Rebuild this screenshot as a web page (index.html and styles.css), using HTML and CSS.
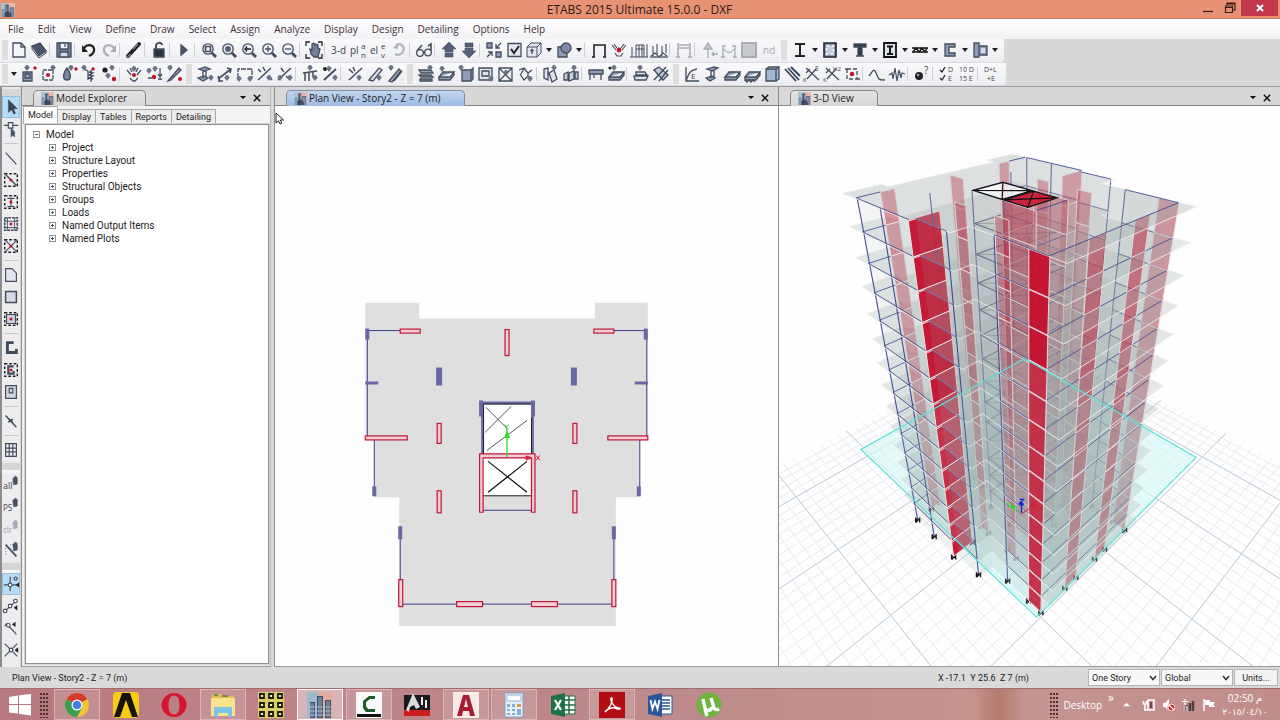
FILE: index.html
```html
<!DOCTYPE html>
<html lang="en">
<head>
<meta charset="utf-8">
<title>ETABS 2015 Ultimate 15.0.0 - DXF</title>
<link rel="stylesheet" href="styles.css">
</head>
<body>
<svg class="defs" aria-hidden="true">
  <symbol id="app" viewBox="0 0 16 16">
    <rect width="16" height="16" fill="#e8b9ae"/><rect width="7" height="16" fill="#a9c3cf"/>
    <rect x="1" y="7" width="3" height="9" fill="#5b83a0"/><rect x="5" y="2" width="4" height="14" fill="#2d3c5c"/>
    <rect x="10" y="5" width="5" height="11" fill="#56637f"/>
    <path d="M6 3v13M8 3v13M11.500 6v10M13.500 6v10M2.500 8v8" stroke="#cdd6e4" stroke-width=".7"/>
    <path d="M4 11l4-2 4 3v4H4z" fill="#26314c" opacity=".7"/>
  </symbol>
  <symbol id="x" viewBox="0 0 10 10"><path d="M1 1l8 8M9 1l-8 8" stroke="currentColor" stroke-width="1.8"/></symbol>
  <symbol id="down" viewBox="0 0 10 6"><path d="M1 1h8L5 5z" fill="currentColor"/></symbol>
  <symbol id="chev" viewBox="0 0 8 6"><path d="M1 1l3 3.500L7 1" fill="none" stroke="#333" stroke-width="1.500"/></symbol>
</svg>
<div class="window">
  <header class="titlebar">
    <svg class="title-icon"><use href="#app"/></svg>
    <h1>ETABS 2015 Ultimate 15.0.0 - DXF</h1>
    <div class="win-buttons">
      <button aria-label="Minimize"><svg viewBox="0 0 12 12"><path d="M1 9.500h10" stroke="#3a1d16" stroke-width="1.300"/></svg></button>
      <button aria-label="Restore"><svg viewBox="0 0 12 12"><path d="M3 3V1h8v7H9M1.500 4h7v6.500h-7zM1.500 5.500h7M3 2h8" fill="none" stroke="#3a1d16" stroke-width="1.200"/></svg></button>
      <button class="win-close" aria-label="Close"><svg viewBox="0 0 12 12"><path d="M3 3l6 6M9 3l-6 6" stroke="#fff" stroke-width="2"/></svg></button>
    </div>
  </header>
  <nav class="menubar">
    <button>File</button><button>Edit</button><button>View</button><button>Define</button><button>Draw</button><button>Select</button><button>Assign</button><button>Analyze</button><button>Display</button><button>Design</button><button>Detailing</button><button>Options</button><button>Help</button>
  </nav>
  <div class="toolbars">
    <div class="toolbar" id="bar-main" role="toolbar" aria-label="Main"></div>
    <div class="toolbar" id="bar-assign" role="toolbar" aria-label="Assign"></div>
  </div>
  <main class="workspace">
    <div class="side-tools" id="bar-side" role="toolbar" aria-label="Draw"></div>
    <section class="panel explorer">
      <div class="panel-head">
        <h2 class="panel-tab"><svg><use href="#app"/></svg>Model Explorer</h2>
        <button aria-label="Panel menu"><svg class="i-down"><use href="#down"/></svg></button>
        <button aria-label="Close panel"><svg class="i-x"><use href="#x"/></svg></button>
      </div>
      <div class="tabs" role="tablist">
        <button role="tab" class="tab active" aria-selected="true">Model</button><button role="tab" class="tab">Display</button><button role="tab" class="tab">Tables</button><button role="tab" class="tab">Reports</button><button role="tab" class="tab">Detailing</button>
      </div>
      <div class="tree-box">
        <ul class="tree">
          <li><button class="twist minus" aria-label="Collapse"></button><span>Model</span>
            <ul>
              <li><button class="twist" aria-label="Expand"></button><span>Project</span></li>
              <li><button class="twist" aria-label="Expand"></button><span>Structure Layout</span></li>
              <li><button class="twist" aria-label="Expand"></button><span>Properties</span></li>
              <li><button class="twist" aria-label="Expand"></button><span>Structural Objects</span></li>
              <li><button class="twist" aria-label="Expand"></button><span>Groups</span></li>
              <li><button class="twist" aria-label="Expand"></button><span>Loads</span></li>
              <li><button class="twist" aria-label="Expand"></button><span>Named Output Items</span></li>
              <li><button class="twist" aria-label="Expand"></button><span>Named Plots</span></li>
            </ul>
          </li>
        </ul>
      </div>
    </section>
    <section class="panel plan">
      <div class="panel-head">
        <h2 class="panel-tab current"><svg><use href="#app"/></svg>Plan View - Story2 - Z = 7 (m)</h2>
        <button aria-label="Panel menu"><svg class="i-down"><use href="#down"/></svg></button>
        <button aria-label="Close panel"><svg class="i-x"><use href="#x"/></svg></button>
      </div>
      <div class="canvas">
        <svg class="drawing" id="plan" viewBox="275 106 503 561"></svg>
        <svg class="cursor" viewBox="0 0 10 14"><path d="M1 1v10l2.500-2.300L5 12l1.800-.8L5.300 8H8.500z" fill="#fff" stroke="#222"/></svg>
      </div>
    </section>
    <section class="panel view3d">
      <div class="panel-head">
        <h2 class="panel-tab"><svg><use href="#app"/></svg>3-D View</h2>
        <button aria-label="Panel menu"><svg class="i-down"><use href="#down"/></svg></button>
        <button aria-label="Close panel"><svg class="i-x"><use href="#x"/></svg></button>
      </div>
      <div class="canvas"><svg class="drawing" id="tower" viewBox="779 106 500 561"></svg></div>
    </section>
  </main>
  <footer class="statusbar">
    <span class="status-text">Plan View - Story2 - Z = 7 (m)</span>
    <span class="coords">X -17.1&nbsp; Y 25.6&nbsp; Z 7 (m)</span>
    <label class="pick"><select aria-label="Story mode"><option>One Story</option></select><svg><use href="#chev"/></svg></label>
    <label class="pick"><select aria-label="Coordinate system"><option>Global</option></select><svg><use href="#chev"/></svg></label>
    <button class="units">Units...</button>
  </footer>
  <div class="taskbar">
    <button class="start" aria-label="Start"><svg viewBox="0 0 24 24"><path d="M1 4l9-1.500V11H1zM11 2.300L23 1v10H11zM1 12h9v8.500L1 19.500zM11 12h12v10.500L11 20.700z" fill="#fff"/></svg></button>
    <span class="dots"></span>
    <div class="apps" id="apps"></div>
    <div class="tray">
      <span class="dots"></span>
      <span class="desktop">Desktop</span><span class="more">»</span>
      <svg class="tri" viewBox="0 0 8 5"><path d="M0 4.500h8L4 .5z" fill="#fff"/></svg>
      <svg class="tray-i" viewBox="0 0 14 14"><path d="M6 2h6v10H6zM1.500 3v3h3V3M3 6v6M2 12h4" fill="none" stroke="#fff" stroke-width="1.500"/><path d="M8 4h2v6H8z" fill="#6b4545"/></svg>
      <svg class="tray-i" viewBox="0 0 14 14"><path d="M1 5h2l4-4v12L3 9H1z" fill="#fff"/><circle cx="9.500" cy="9.500" r="4" fill="#c22" /><path d="M7 7l5 5" stroke="#fff" stroke-width="1.300"/><circle cx="9.500" cy="9.500" r="3.500" fill="none" stroke="#fff"/></svg>
      <svg class="tray-i" viewBox="0 0 14 14"><path d="M2 9v4M5 7v6M8 5v8M11 3v10" stroke="#54403f" stroke-width="2.400"/><path d="M3 1v6M0 3.500h6M2 9v4M5 8v5" stroke="#fff" stroke-width="1.200"/></svg>
      <svg class="tray-i" viewBox="0 0 14 14"><path d="M2 1v12" stroke="#fff" stroke-width="1.500"/><path d="M3 2h5v2h5l-1.500 2.500L13 9H7V7H3z" fill="#fff"/></svg>
      <div class="clock"><span>02:50 م</span><bdo dir="ltr">٢٠١٥/٠٤/١٠</bdo></div>
    </div>
  </div>
</div>
<script src="app.js"></script>
</body>
</html>
```
FILE: styles.css
```css
* { box-sizing: border-box; }
body { margin: 0; font-family: Roboto, "Liberation Sans", Arial, sans-serif; font-size: 10px; color: #1c1c1c; }
button { font: inherit; color: inherit; background: none; border: 0; padding: 0; margin: 0; }
h1, h2, ul { margin: 0; padding: 0; font-weight: normal; list-style: none; }
.defs { position: absolute; width: 0; height: 0; }
.window { display: flex; flex-direction: column; height: 100vh; overflow: hidden; background: #d8d8d7; }

.titlebar { flex: none; display: flex; align-items: flex-start; height: 19px; background: #e89273; border-bottom: 1px solid #c07a5e; }
.title-icon { width: 14px; height: 14px; margin: 3px 0 0 1px; flex: none; }
.titlebar h1 { flex: 1; padding-left: 67px; text-align: center; font: 12px/20px "Open Sans", "Noto Sans", sans-serif; color: #2c1a14; }
.win-buttons { display: flex; width: 83px; justify-content: flex-end; padding-right: 2px; }
.win-buttons button { width: 22px; height: 16px; display: grid; place-items: center; }
.win-buttons svg { width: 12px; height: 12px; }
.win-buttons .win-close { width: 37px; background: #c2394e; }

.menubar { flex: none; display: flex; gap: 14px; height: 20px; padding-left: 8px; background: linear-gradient(#fdfdfe, #f3f2f5); font: 10px/20px "Open Sans", "Noto Sans", sans-serif; color: #3f3038; }

.toolbars { flex: none; height: 48px; display: flex; flex-direction: column; align-items: flex-start; border-bottom: 1px solid #9b9b9b; }
.toolbar { display: flex; align-items: center; height: 24px; padding-right: 4px; background: linear-gradient(#fafafc, #ecedf1); border-bottom: 1px solid #dcdcdf; border-radius: 0 0 4px 0; }
.tool { width: 20px; height: 22px; display: grid; place-items: center; }
.tool svg, .drop svg { width: 20px; height: 20px; display: block; fill: none; stroke: #444d5e; stroke-width: 1.3; }
.tool text { fill: #3f434b; stroke: none; font-family: "Open Sans", sans-serif; }
.drop { width: 10px; height: 22px; display: grid; place-items: center; }
.drop svg { width: 6px; height: 4px; fill: #222; stroke: none; }
.sep { width: 5px; height: 14px; border-left: 1px solid #cfd0d6; }
.grip { width: 11px; height: 20px; background: linear-gradient(90deg, #f5f5f6 2px, #dededf 2px 8px, #f5f5f6 8px); }
.grip:first-child { width: 9px; }
.off { opacity: .42; }

.workspace { flex: 1; min-height: 0; display: grid; grid-template-columns: 21px 250px minmax(0, 507fr) minmax(0, 502fr); }
.side-tools { display: flex; flex-direction: column; background: #ededf0; border-left: 2px solid #8c8c8c; border-right: 1px solid #d5d5d8; }
.side-tools .tool { width: 18px; height: 22px; flex: none; }
.side-tools .tool svg { width: 18px; height: 18px; }
.side-tools .tool.on { background: #b9dcf5; border: 1px solid #8fc0e6; }
.side-tools .sep { width: 14px; height: 7px; border: 0; margin-left: 2px; background: linear-gradient(transparent 3px, #c6c7cc 3px 4px, transparent 4px); flex: none; }
.side-tools .grip { width: 18px; height: 12px; background: linear-gradient(#e9e9ea 2px, #d6d6d7 2px 9px, #f5f5f6 9px); flex: none; }
.side-tools .grip:first-child { height: 9px; width: 18px; }

.panel { display: flex; flex-direction: column; min-width: 0; min-height: 0; border-bottom: 1px solid #999; border-left: 1px solid #8e8e8e; background: #fff; }
.plan { margin-left: 3px; }
.panel-head { flex: none; display: flex; align-items: center; height: 19px; padding: 3px 6px 0 11px; background: #d8d8d8; border-bottom: 1px solid #858585; }
.panel-head button { width: 14px; height: 14px; display: grid; place-items: center; }
.i-x { width: 8px; height: 8px; color: #111; }
.i-down { width: 8px; height: 5px; color: #111; }
.panel-tab { display: flex; align-items: center; gap: 2px; height: 16px; padding: 0 23px 0 7px; margin-right: auto; border: 1px solid #858585; border-bottom: 0; border-radius: 5px 5px 0 0; font: 10px/14px "Open Sans", "Noto Sans", sans-serif; color: #222; background: linear-gradient(#e4e4e4, #d6d6d6); white-space: nowrap; }
.panel-tab svg { width: 13px; height: 13px; }
.panel-tab.current { background: linear-gradient(#c3d5ee, #9dbce4); border-color: #7e8fa8; }

.explorer { background: #f0f0f0; border-right: 1px solid #bbb; }
.explorer .panel-tab { padding-right: 18px; }
.tabs { flex: none; display: flex; align-items: flex-end; height: 18px; padding-left: 1px; background: #f4f4f4; font-size: 9px; }
.tab { height: 15px; padding: 0 4px; border: 1px solid #a8a8a8; border-left: 0; border-bottom: 0; background: #ededed; line-height: 14px; }
.tab.active { height: 18px; background: #fff; border-left: 1px solid #a8a8a8; line-height: 15px; }
.tree-box { flex: 1; margin: 0 1px 2px 3px; border: 1px solid #8f8f8f; background: #fff; outline: 1px solid #d5d5d5; padding: 3px 0 0 7px; line-height: 13px; }
.tree li { white-space: nowrap; }
.tree ul { margin-left: 16px; }
.tree span { margin-left: 6px; vertical-align: top; }
.twist { width: 7px; height: 7px; margin-top: 3px; vertical-align: top; border: 1px solid #909090; background: linear-gradient(#555, #555) center/3px 1px no-repeat, linear-gradient(#555, #555) center/1px 3px no-repeat, #fff; }
.twist.minus { background: linear-gradient(#555, #555) center/3px 1px no-repeat, #fff; }

.canvas { position: relative; flex: 1; min-height: 0; overflow: hidden; background: #fefefe; }
.drawing { display: block; width: 100%; height: 100%; }
.cursor { position: absolute; left: 0; top: 6px; width: 10px; height: 14px; }

.statusbar { flex: none; display: flex; align-items: center; height: 21px; padding: 0 2px 0 12px; background: #dadada; font-size: 9px; }
.status-text { flex: 1; }
.coords { margin-right: 59px; }
.pick { position: relative; width: 72px; height: 17px; margin-right: 1px; }
.pick select { appearance: none; width: 100%; height: 100%; margin: 0; padding: 0 3px; border: 1px solid #b5b5b5; border-radius: 0; background: #f8f8f8; font: inherit; color: #222; }
.pick svg { position: absolute; right: 3px; top: 6px; width: 8px; height: 6px; pointer-events: none; }
.units { width: 44px; height: 17px; background: #f3f3f3; border: 1px solid #b5b5b5; }

.taskbar { flex: none; display: flex; align-items: center; height: 32px; padding-left: 8px; border-top: 1px solid #a06c6d; background: linear-gradient(90deg, #b77880, #be8388 20%, #bd898b 50%, #c49490 76%, #b27a6c 78%, #c39592 80%, #c18d8a); color: #fff; font-family: "Open Sans", "Noto Sans", "DejaVu Sans", sans-serif; }
.start { width: 24px; height: 24px; }
.start svg { display: block; }
.dots { flex: none; width: 9px; height: 26px; margin: 0 5px 0 8px; background: radial-gradient(circle at 1px 1px, #4e2f33 1px, transparent 1px) 0 1px/3px 4px; }
.apps { display: flex; justify-content: space-between; width: 678px; height: 31px; flex: none; }
.app { width: 46px; height: 31px; display: grid; place-items: center; border: 1px solid transparent; }
.app.run { border-color: #d9b3b6; background: rgba(255,255,255,.14); }
.app.now { border-color: #fff; background: rgba(255,255,255,.4); }
.app svg { width: 26px; height: 26px; display: block; }
.tray { flex: 1; display: flex; align-items: center; justify-content: flex-end; gap: 6px; padding-right: 14px; }
.tray .dots { margin: 0 -2px 0 0; }
.desktop { font-size: 10px; }
.more { align-self: flex-start; font-size: 12px; line-height: 14px; }
.tri { width: 7px; height: 5px; margin: 0 6px 0 3px; }
.tray-i { width: 14px; height: 14px; }
.clock { display: flex; flex-direction: column; align-items: center; width: 42px; margin-left: 2px; font: 10px/14px "Open Sans", "DejaVu Sans", sans-serif; white-space: nowrap; }
.clock bdo { font-size: 9px; }
```
FILE: app.js
```js
const F = '#8f9db8', R = '#c4142c';
const dot = (x, y, c = R, r = 1.7) => `<circle cx="${x}" cy="${y}" r="${r}" fill="${c}" stroke="none"/>`;
const pin = (x, y) => `<path d="M${x - 3} ${y - 1}h6l-3 4z" fill="#6c7386" stroke="none"/>` + dot(x, y - 1, '#6c7386', 2);
const lens = inner => `<circle cx="9" cy="9" r="5.200" fill="#eef1f6"/><path d="M13 13l4 4" stroke-width="2.800"/>${inner}`;
const dash = 'stroke-dasharray="3 2"';
const frame = `<path d="M3 3h14v14H3z" ${dash} stroke="#222" stroke-width="1.600"/>`;
const slab = `<path d="M3 13l4-5h11l-4 5zM3 13v3h11l4-5V8" fill="${F}"/>`;
const txt = (s, x = 1, y = 14, size = 10) => `<text x="${x}" y="${y}" font-size="${size}">${s}</text>`;

const icons = {
  new: '<path d="M4 3h8l4 4v10H4z" fill="#f3f5fa"/><path d="M12 3v4h4"/>',
  open: '<path d="M3 6l8-3 6 8-7 6z" fill="#4a5468"/><path d="M3 6v3l7 9 7-5v-2l-7 5z" fill="#c5cde0" stroke-width="1"/>',
  save: `<path d="M3 3h14v14H3z" fill="#6d7ba0"/><path d="M6 3h8v6H6z" fill="#f0f2f8"/><path d="M6 12h8v5H6z" fill="#d6dbe8"/><path d="M11 4v3"/>`,
  undo: '<path d="M5 8c4-5 11-3 10 3-.5 3-3 4-5 5" stroke="#222" stroke-width="2.200"/><path d="M3 5v7h6z" fill="#222" stroke="none"/>',
  redo: '<g opacity=".4"><path d="M15 8C11 3 4 5 5 11c.5 3 3 4 5 5" stroke-width="2.200"/><path d="M17 5v7h-6z" fill="#444" stroke="none"/></g>',
  pen: '<path d="M4 16L15 4" stroke="#222" stroke-width="4" stroke-linecap="round"/><path d="M3 17l4-3M9 9l5-5" stroke="#8a93a6"/>',
  lock: '<path d="M5 9h10v8H5z" fill="#2c3442"/><path d="M7 9V6c0-4 6-4 6-1" stroke-width="2"/>',
  run: '<path d="M7 5v10l6-5z" fill="#4a5264"/>',
  zwin: lens('<path d="M6.500 6.500h5v5h-5z" stroke-width="1.600"/>'), zfull: lens(dot(9, 9, '#5a6478', 3)),
  zprev: lens('<path d="M6 9h6M8 6.500L6 9l2 2.500" stroke="#223"/>'), zin: lens('<path d="M6 9h6M9 6v6"/>'), zout: lens('<path d="M6 9h6"/>'),
  pan: '<path d="M2 6V2h4M14 2h4v4M18 14v4h-4M6 18H2v-4" stroke="#222"/><path d="M6 9l1 5 3 3h4l2-8-2-1V5l-2-1-1 1-1-2-2 1v6z" fill="#77809a"/>',
  d3: txt('3-d', 2, 14, 10), plan: txt('pl', 1, 14, 10) + txt('a', 12, 9, 8) + txt('n', 12, 18, 8), elev: txt('el', 1, 14, 10) + txt('e', 12, 9, 8) + txt('v', 12, 18, 8),
  rot: '<path d="M7 5c6-3 10 3 6 8-2 2-5 2-7 1" stroke="#b1b4ba" stroke-width="2.200"/><path d="M4 8l5-5v6z" fill="#b1b4ba" stroke="none"/>',
  glass: '<circle cx="6" cy="13" r="3.300"/><circle cx="14" cy="12.500" r="3.300"/><path d="M3 11l5-6M17 11V4l-3 2M9 12h2" stroke-width="1.600"/>',
  up: '<path d="M10 2l7 7h-3v3H6V9H3zM6 13h8v4H6z" fill="#555f78" stroke-width=".6"/>', dn: '<path d="M10 18l7-7h-3V8H6v3H3zM6 3h8v4H6z" fill="#555f78" stroke-width=".6"/>',
  shrink: `<path d="M3 3h5v5H3zM12 12h5v5h-5z" fill="${F}"/><path d="M17 3l-5 5M12 4v4h4M3 17l5-5M4 12h4v4"/>`,
  check: '<path d="M4 3.500h13v13H4z" fill="#e3e7f1"/><path d="M7 9l3 4 5-7" stroke="#222" stroke-width="2"/>',
  cube: '<path d="M3 7h10v10H3zM3 7l4-4h10l-4 4M17 3v10l-4 4" fill="#dfe4ee" stroke-width="1"/><path d="M8 14v-4M6.500 11L8 9.500 9.500 11"/>',
  solid: `<path d="M4 7h9v10H4z" fill="${F}"/><circle cx="12" cy="8" r="5" fill="#7f8cab"/>`,
  portal: '<path d="M5 17V5h11v12M3 17h3M14 17h3" stroke="#222" stroke-width="1.600"/>',
  ball: '<path d="M3 5l4 5M17 5l-4 5M5 4l3 4M15 4l-3 4M6 13l2 3h4l2-3" stroke-width="1.100"/>' + dot(10, 10, R, 2.400),
  mom: '<path d="M3 17V7M7 17V5h8v12M18 17V4M1 17h18M7 9h8M10 5v12M13 5v12" stroke-width="1"/>',
  mom2: '<path d="M4 16V6M8 14V4M13 16V6M17 13V4M2 16l4-3 4 4 4-4 4 3" stroke-width="1.100"/><path d="M1 17h18"/>',
  g1: '<path d="M4 17V8h12v9M2 17h4M14 17h4M4 5h12M4 3v4M16 3v4" stroke-width="1.500"/>',
  g2: '<path d="M9 3l-4 6h8zM9 9v9M13 14h6M15 12l-2 2 2 2" fill="#7c8088"/>',
  g3: '<path d="M4 17V6M16 17V6M3 6h4M13 6h4M4 8c4 6 8 6 12 0M2 17h4M14 17h4"/>',
  g4: '<path d="M3 3h14v14H3z" fill="#8e9299" stroke-width="2"/>', nd: txt('nd', 4, 14, 10),
  ibeam: '<path d="M5 4h10M5 16h10M10 4v12" stroke="#222" stroke-width="2"/>',
  conc: `<path d="M4 3h12v14H4z" fill="${F}" stroke="#223" stroke-width="1.600"/><path d="M6.500 6h7v8h-7z" fill="#c4cbdb" stroke="#fff" ${dash}/>`,
  tee: '<path d="M4 4h12v3H4zM8 7h4v9H8zM6 16h8" fill="#333b48"/>',
  comp: '<path d="M4 3h12v14H4z" fill="#dfe3ec" stroke="#111" stroke-width="1.800"/><path d="M7 6.500h6M7 14h6M10 6v8" stroke="#111" stroke-width="2"/>',
  joist: '<path d="M2 8h16M2 12h16M3 12l3-4 3 4 3-4 3 4 2-4" stroke="#111" stroke-width="1.400"/>',
  chan: `<path d="M15 4H5v12h10v-3H9V7h6z" fill="${F}"/>`,
  base: `<path d="M4 3h5v14H4zM9 6h8v9H9z" fill="${F}"/><path d="M12 8v5M14 8v5" stroke="#fff"/>`,
  j1: `<path d="M4 8h9v9H4zM6 10h5v4H6z" fill="${F}"/>` + pin(8, 4) + dot(16, 4), j2: '<path d="M4 6h10v10H4z" stroke-dasharray="4 1"/>' + dot(9, 11, R, 2) + pin(14, 4),
  j3: '<path d="M8 4c5 7 4 12 0 12s-5-5 0-12z" fill="#7b89a6"/>' + pin(12, 4) + dot(17, 5), j4: '<path d="M12 6v12M10 8l4 1-4 2 4 1-4 2 4 1M5 5l4 2v9"/>' + pin(5, 4) + dot(14, 5),
  j5: dot(6, 6, '#222', 2.6) + pin(13, 4) + pin(9, 12) + dot(15, 15, R, 2.200),
  s1: '<path d="M3 6l4 5M17 6l-4 5M6 4l2 4M14 4l-2 4M6 14l3 3h2l3-3"/>' + dot(10, 11, R, 2) + pin(10, 5), s2: pin(5, 7) + pin(11, 5) + dot(10, 13, R, 2.200) + '<path d="M16 4v8M14 10l2 3 2-3M4 14h4M14 15h4"/>',
  s3: '<path d="M4 17L15 4l2 2L7 16z" fill="#9aa3b7"/>' + pin(6, 4) + dot(16, 15, R, 2),
  f1: `<path d="M4 5l6-2 5 2-6 2zM8 7v7M11 7v6M3 14l6-2 4 2-5 3z" fill="${F}"/>` + pin(16, 14), f2: '<path d="M3 15L16 5M3 12l2 5M12 4l4 1-1 4M3 17h5" stroke-width="1.600"/>' + pin(12, 14),
  f3: '<path d="M3 14V5h14v9" stroke-dasharray="5 1"/>' + pin(4, 15) + pin(15, 15), f4: '<path d="M3 16L16 4M6 8l-3-3M10 7L8 3M14 12l3 4" stroke-width="1.500"/>' + pin(14, 14),
  f5: '<path d="M3 16L16 4M6 4l3 4M11 12l4 4" stroke-width="1.500"/>' + pin(5, 14) + pin(15, 14),
  f6: '<path d="M3 9l14-2M5 9v8M9 9v8M13 8v5" stroke-width="1.500"/>' + pin(10, 4) + pin(15, 14), f7: '<path d="M4 16L16 5" stroke-width="1.800"/>' + dot(5, 5, '#222', 2) + pin(9, 5) + pin(15, 14),
  f8: '<path d="M4 16L17 4M4 5l4 4M8 3l2 4" stroke-width="1.500"/>' + pin(14, 14), f9: '<path d="M4 16L14 4l3 2L8 17z" fill="#dfe3ec"/>' + pin(14, 14), f10: '<path d="M4 17L14 5l2 2L7 18zM9 17L17 7" fill="#a3acc0"/>' + pin(6, 4),
  a1: `<path d="M3 6h12l2 3H5zM3 11h12l2 2H5zM4 15h12v2H4z" fill="${F}"/>` + pin(14, 4), a2: slab + pin(6, 5), a3: `<path d="M6 6h9v11H6zM15 6l2-2v11l-2 2" fill="${F}"/>` + pin(5, 4),
  a4: '<path d="M3 4h13v12H3zM6 7h7v5H6z" fill="#dfe3ec"/>' + pin(15, 15), a5: '<path d="M3 4h13v13H3zM3 4l13 13M16 4L3 17"/>' + pin(10, 9), a6: '<path d="M3 6l5-2 4 5 4-3M4 10l4 6 4-4 4 3M8 4l-3 6M12 9v4"/>' + pin(14, 15),
  w1: `<path d="M3 5l4-1v12l-4-2zM8 9l5-3 3 9-5 3z" fill="#dfe3ec"/>` + pin(13, 4), w2: '<path d="M3 10l4-2v8H3zM8 9l5-2v8l-5 2zM14 8h3v7h-3z" fill="#c9cfdd"/>' + pin(13, 4),
  q1: `<path d="M3 6h14v4H3zM4 10v6M8 10v4M15 10v6" fill="${F}"/>`, q2: slab + dot(4, 4, '#222', 1.600) + pin(8, 4), q3: '<path d="M3 12h14l-2 4H4zM5 8h9l2 3H5z" fill="#dfe3ec"/>' + pin(9, 4), q4: '<path d="M3 6l9 10 5-5-9-8zM3 16L15 3M8 17l9-11" stroke-width="1.400" fill="#c3cada"/>',
  axE: '<path d="M4 3v14h13M4 17C7 8 9 6 15 5" />' + txt('E', 9, 15, 8), sect: `<path d="M5 5l7-2 4 1-6 3zM9 7v7M12 6v7M4 14l6-2 3 2-5 3z" fill="${F}"/>`, sl1: slab, sl2: slab + '<path d="M3 16l2 2 2-2 2 2 2-2 2 2"/>',
  wall: '<path d="M4 5h10v12H4zM14 5l3-2v12l-3 2M4 5l3-2h10" fill="#9fb6d0"/>', rebar: '<path d="M3 5l11 12M6 4l11 12M9 3l9 9" stroke="#36405a" stroke-width="1.800"/>',
  kE: '<path d="M4 4l13 12M14 5L5 15M4 9l4-4" />' + txt('E', 13, 7, 7) + txt('K', 1, 18, 6), kH: '<path d="M4 4l13 12M14 5L5 15M4 9l4-4"/>' + txt('H2', 11, 7, 6) + txt('K', 1, 18, 6),
  pier: '<path d="M5 5h10v10H5zM3 5h3M14 15h4" stroke-dasharray="4 2"/>' + dot(10, 10, R, 2.200),
  curve: '<path d="M2 12l3-4c3-6 5 5 7 7 1 1 3 1 6 1"/>', quake: '<path d="M2 11l3-2 1 6 2-11 2 13 2-11 2 8 1-5 3 1" stroke-width="1.200"/>', ask: dot(7, 12, '#222', 4) + dot(6, 11, '#aab', 1.200) + txt('?', 12, 10, 10),
  de: '<path d="M3 6l2 2 3-5M3 14l2 2 3-5" stroke="#222"/>' + txt('D', 11, 8, 7) + txt('E', 11, 17, 7), ten: txt('10 D', 2, 8, 7) + txt('15 E', 2, 17, 7), dl: txt('D+L', 2, 8, 7) + txt('+E', 5, 17, 7),
  sel: '<path d="M6 2v14l3.500-3 2.500 5 2-1-2.500-5H16z" fill="#39435a" stroke-width=".6"/>', resh: '<path d="M2 6h5M12 6h6M7 3h5v6H7z"/><path d="M10 9v10l2-2 2 2V13z" fill="#4c566c" stroke-width=".6"/>', line: '<path d="M4 4l12 13"/>',
  l1: frame + '<path d="M4 4l12 12" stroke-width="1.600"/>' + dot(10, 10), l2: frame + '<path d="M6 6h8M10 6v9M6 15h8"/>' + dot(10, 10), l3: '<path d="M3 3h14v14H3z" stroke-width="1.800" stroke-dasharray="3 1"/><path d="M6 3v14M14 3v14M3 7h14M3 14h14" stroke-width="1"/>' + dot(10, 10), l4: frame + '<path d="M3 3l14 14M17 3L3 17"/>' + dot(10, 10),
  p1: '<path d="M4 3h7l5 5v9H4z" fill="#e3e6ee"/>', p2: '<path d="M4 4h12v12H4z" fill="#d5dae6" stroke-width="1.700"/>', p3: frame + '<path d="M5 5h10v10H5z" fill="#ccd2df"/>' + dot(10, 10),
  u1: '<path d="M13 4H6v11h10v-4" stroke-width="3.200"/>', u2: frame + '<path d="M13 6H7v8h6v-3" stroke-width="2.400"/>' + dot(10, 10), u3: '<path d="M4 3h12v14H4z" fill="#d2d8e4"/><path d="M8 6h4v5H8z"/>',
  ref: '<path d="M4 4l12 13" stroke-width="1.600"/><path d="M8 8l4 4M7 11l5-3" stroke-width="2"/>', grid: '<path d="M4 3h12v14H4zM8 3v14M12 3v14M4 8h12M4 12h12"/>',
  all: txt('all', 1, 16, 10), ps: txt('PS', 1, 16, 9), clr: txt('clr', 1, 16, 9), inter: '<path d="M4 4l12 13" stroke-width="2"/><path d="M4 8v9M9 4h5" stroke="#5d8fd0" stroke-dasharray="1 2"/>',
  n1: '<path d="M8 2v16M1 11h16"/><circle cx="8" cy="11" r="2" fill="#fff"/><circle cx="14" cy="4" r="1.800"/><path d="M18 8v6l-4-3z" fill="#222" stroke="none"/>',
  n2: '<path d="M3 16L16 4"/><circle cx="3.500" cy="15.500" r="2" fill="#fff"/><circle cx="9" cy="10" r="2" fill="#fff"/><circle cx="15" cy="4.500" r="2" fill="#fff"/><path d="M17 9v6l-4-3z" fill="#222" stroke="none"/>',
  n3: '<path d="M5 5l11 12M5 5l-2 3"/><circle cx="7" cy="7" r="2" fill="#fff"/><path d="M15 3v6l-4-3z" fill="#222" stroke="none"/>', n4: '<path d="M3 3l14 14M17 3L3 17"/><circle cx="10" cy="10" r="2" fill="#fff"/><path d="M18 7v6l-4-3z" fill="#222" stroke="none"/>',
};
const hand = '<path d="M12 4l3-3 2 2v7l-4 1z" fill="#4a5366" stroke-width=".6"/>';
for (const k of ['all', 'ps', 'clr', 'inter']) icons[k] += hand;

const svg = (body, box = '0 0 20 20') => `<svg viewBox="${box}" aria-hidden="true">${body}</svg>`;
const build = (id, list) => {
  document.getElementById(id).innerHTML = list.split(' ').map(t => {
    if (t === '|') return '<span class="sep"></span>';
    if (t === ':') return '<span class="grip"></span>';
    if (t === 'v') return `<button class="drop" aria-label="More">${svg('<path d="M0 0h6L3 4z"/>', '0 0 6 4')}</button>`;
    const name = t.replace(/[-+]/, '');
    const cls = t[0] === '-' ? ' off' : t[0] === '+' ? ' on' : '';
    return `<button class="tool${cls}" aria-label="${name}">${svg(icons[name])}</button>`;
  }).join('');
};
build('bar-main', ': new open | save | undo redo | pen | lock | run | zwin zfull zprev zin zout | pan | d3 plan elev rot | glass | up dn | shrink check cube v solid v | portal ball mom mom2 | -g1 | -g2 -g3 -g4 -nd : ibeam v conc v tee v comp v joist v chan v base v');
build('bar-assign', ': v j1 j2 j3 j4 j5 | s1 s2 s3 : f1 f2 f3 f4 f5 | f6 f7 | f8 f9 f10 : a1 a2 a3 a4 a5 a6 | w1 w2 | q1 q2 | q3 q4 : axE sect sl1 sl2 wall rebar kE kH pier | curve quake | ask | de ten | dl');
build('bar-side', ': +sel resh | line l1 l2 l3 l4 | p1 p2 p3 | u1 u2 u3 | ref | grid : all ps -clr inter : +n1 n2 n3 n4');

const apps = [
  ['Chrome', 'run', '<circle cx="13" cy="13" r="12" fill="#f4c431"/><path d="M13 13L2.600 7A12 12 0 0 1 23.400 7z" fill="#d33b2f"/><path d="M13 13L2.600 7A12 12 0 0 0 13 25l5-9z" fill="#3d9e52"/><circle cx="13" cy="13" r="5.500" fill="#fff"/><circle cx="13" cy="13" r="4.300" fill="#3f7fe0"/>'],
  ['Ansys', '', '<rect width="26" height="26" rx="4" fill="#f6cd12"/><path d="M1 25L9 1h8l8 24h-6L13 8 7 25z" fill="#17140f"/>'],
  ['Opera', '', '<path fill-rule="evenodd" d="M13 1a12.500 12 0 1 0 .1 0zM13 3.500c4 0 5.500 4 5.500 9.500s-1.500 9.500-5.500 9.500S7.500 18.500 7.500 13 9 3.500 13 3.500z" fill="#d5152f"/>'],
  ['File Explorer', 'run', '<path d="M2 2h9l2 2h11v17H2z" fill="#e5bd54"/><path d="M1 6h24v18H1z" fill="#f7e48d"/><path d="M4 15h18v10h-4v-4H8v4H4z" fill="#7fc4e6"/><path d="M4 3h4M12 4h6" stroke="#7b8a52" stroke-width="2"/>'],
  ['SAFE', '', '<rect width="26" height="26" fill="#d8cf62"/><path d="M2 2h4v4H2zM11 2h4v4h-4zM20 2h4v4h-4zM2 11h4v4H2zM11 11h4v4h-4zM20 11h4v4h-4zM2 20h4v4H2zM11 20h4v4h-4zM20 20h4v4h-4z" fill="#f5f0a8" stroke="#1c1a10" stroke-width="1.800"/>'],
  ['ETABS', 'now', '<rect width="26" height="26" fill="#dfae9f"/><rect width="11" height="26" fill="#9cbccb"/><path d="M3 10h5v16H3zM10 4h6v22h-6zM18 8h6v18h-6z" fill="#3d4f70"/><path d="M4 11v14M6 11v14M12 5v20M14 5v20M20 9v16M22 9v16M2 15h22M2 19h22M2 23h22" stroke="#b9c6d6" stroke-width=".8"/>'],
  ['Camtasia', 'run', '<rect width="26" height="26" fill="#fafafa"/><path d="M19 4h-6L7 9v7l3 4h9v-3h-7l-2-3v-4l4-3h5z" fill="#1d5a2a"/><path d="M1 22h24v3H1z" fill="#111"/>'],
  ['AutoCAD 2013', '', '<path d="M0 3h26v16H0z" fill="#1c1a1a"/><path d="M0 18h26v6H0z" fill="#cf1c1c"/><path d="M2 18L9 1l7 14-4 2-2-4-4 2-1 5z" fill="#dcdcdc"/><path d="M18 5v8M22 8v8" stroke="#eee" stroke-width="2"/>'],
  ['AutoCAD', 'run', '<rect width="26" height="26" fill="#f8ebe6"/><path fill-rule="evenodd" d="M4 24L10 3h6l6 21h-5l-1-5h-6l-1 5zM11 15h4l-2-8z" fill="#a81c34"/>'],
  ['Calculator', 'run', '<path d="M4 1h18v24H4z" fill="#e6f1fa" stroke="#7fa3c4"/><path d="M6 3h14v6H6z" fill="#fff" stroke="#8fb3d1"/><path d="M6 12h3v3H6zM11 12h3v3h-3zM6 17h3v2H6zM11 17h3v2h-3zM6 21h3v2H6zM11 21h3v2h-3z" fill="#86add0"/><path d="M16 12h4v3h-4z" fill="#e39a42"/><path d="M16 17h4v6h-4z" fill="#86add0"/>'],
  ['Excel', '', '<path d="M14 4h11v18H14z" fill="#fff" stroke="#1e7145"/><path d="M14 8h11M14 13h11M14 18h11M19 4v18" stroke="#1e7145" stroke-width="1.500"/><path d="M1 4l14-3v24L1 22z" fill="#1e7145"/><path d="M5 8l6 10M11 8L5 18" stroke="#fff" stroke-width="2.200"/>'],
  ['Adobe Reader', 'run', '<rect width="26" height="26" fill="#b30d14"/><path d="M6 20c3-2 8-9 7-14-3-1 0 9 7 10 3 1 0 2-4 0-3-1-8 1-10 4z" fill="none" stroke="#fff" stroke-width="1.400"/>'],
  ['Word', '', '<path d="M14 4h11v18H14z" fill="#fff" stroke="#2b579a"/><path d="M15 8h8M15 11h8M15 14h8M15 17h8" stroke="#2b579a" stroke-width="1.500"/><path d="M1 4l14-3v24L1 22z" fill="#2b579a"/><path d="M3.500 8l2 9L8 9.500l2.500 7.500 2-9" fill="none" stroke="#fff" stroke-width="1.800"/>'],
  ['uTorrent', '', '<circle cx="13" cy="13" r="12.500" fill="#6db33f"/><path d="M7 7l2 9c1 4 6 3 7-1M15 6l3 10c1 2 3 2 5 1M9 17l2 7" fill="none" stroke="#fff" stroke-width="3.400"/>'],
];
document.getElementById('apps').innerHTML = apps.map(([n, c, b]) => `<button class="app ${c}" aria-label="${n}">${svg(b, '0 0 26 26')}</button>`).join('');

/* Storey geometry, shared by both views */
const outline = [[365, 303], [419, 303], [419, 318], [595, 318], [595, 303], [648, 303], [648, 441], [640, 441], [640, 498], [616, 498], [616, 627], [399, 627], [399, 498], [374, 498], [374, 441], [365, 441]];
const planOutline = [[365, 303], [419, 303], [419, 319], [595, 319], [595, 303], [648, 303], [648, 441], [640, 441], [640, 498], [616, 498], [616, 627], [399, 627], [399, 498], [374, 498], [374, 441], [365, 441]];
const beams = [[367, 331, 400, 331], [614, 331, 647, 331], [367, 334, 367, 438], [647, 334, 647, 438], [374, 440, 374, 492], [640, 440, 640, 492], [400, 533, 400, 605], [614, 533, 614, 605], [400, 605, 614, 605], [482, 405, 482, 457], [533, 405, 533, 457], [482, 404, 533, 404], [482, 511, 533, 511]];
const rects = [[400, 329.500, 20, 4], [594, 329.500, 20, 4], [505, 330, 4, 26], [365, 436.500, 42, 4], [608, 436.500, 40, 4], [437, 424, 4, 20], [573, 424, 4, 20], [437, 491.500, 4, 22], [573, 491.500, 4, 22], [398.500, 580.500, 4, 27], [612, 580.500, 4, 27], [456.500, 602.500, 26, 5], [531.500, 602.500, 26, 5]];
const posts = [[365, 329, 4, 11], [644, 329, 4, 11], [365, 382, 13, 3], [635, 382, 13, 3], [436, 368, 6, 18], [571, 368, 6, 18], [372, 487, 4, 10], [637, 487, 4, 10], [398, 527, 4, 13], [612, 527, 4, 13], [479, 401, 4, 16], [531, 401, 4, 16]];

document.getElementById('plan').innerHTML = `
  <polygon points="${planOutline.join(' ')}" fill="#dfdfdf"/>
  <g stroke="#3a3a8c" fill="none">${beams.map(b => `<path d="M${b[0]} ${b[1]}L${b[2]} ${b[3]}"/>`).join('')}</g>
  <path d="M483 404h49v53h-49zM483 459h49v37h-49z" fill="#fff"/>
  <path d="M482.500 405v51M532.500 405v51" stroke="#6c6ca8" stroke-width="2.500"/><path d="M483 403.500h49" stroke="#6c6ca8" stroke-width="3"/><path d="M483 404.500h49M483.500 405v50M531.500 418v36M483 496.500h49" stroke="#222"/>
  <path d="M486 408l22 22M511 407l-26 26M487 451l40-30" stroke="#555" fill="none"/><path d="M488 462l39 31M527 462l-39 31" stroke="#111" stroke-width="1.200"/>
  <g fill="#6a68a4">${posts.map(p => `<rect x="${p[0]}" y="${p[1]}" width="${p[2]}" height="${p[3]}"/>`).join('')}</g>
  <g fill="#ecd0d4" stroke="#c4143c" stroke-width="1.200">${rects.map(p => `<rect x="${p[0]}" y="${p[1]}" width="${p[2]}" height="${p[3]}"/>`).join('')}
  <path d="M479.500 454.500h55.500v58.500h-3.500v-54.500h-48.500v54.500h-3.500z"/></g>
  <path d="M507 458v-22M505 438l2-6 2 6z" stroke="#2be02b" fill="#2be02b" stroke-width="1.300"/><path d="M504.500 425l2 2.500 2-2.500M506.500 427v4" stroke="#2be02b" fill="none"/>
  <path d="M526 456.500l6 2-6 2zM536 456l4 5M540 456l-4 5" stroke="#e0213c" fill="#e0213c"/>`;

/* Perspective camera solved by least squares from [x, y, storey, u, v] control points */
const control = [
  [367, 334, 0, 917, 520], [367, 383, 0, 936, 536], [366, 438, 0, 952, 557], [374, 492, 0, 978, 576], [400, 533, 0, 1007, 583], [400, 580, 0, 1028, 602], [400, 606, 0, 1040, 613],
  [456, 605, 0, 1064, 589], [483, 605, 0, 1075, 578], [530, 605, 0, 1093, 559], [558, 605, 0, 1104, 550], [614, 605, 0, 1124, 530],
  [367, 334, 14, 855, 198], [366, 438, 14, 906, 220], [407, 438, 14, 939, 212], [374, 492, 14, 946, 232], [400, 533, 14, 993, 237], [400, 580, 14, 1029, 249], [400, 606, 14, 1050, 257], [614, 605, 14, 1179, 203],
  [400, 606, 7, 1044, 479], [400, 606, 11, 1048, 368],
];
const norm = (x, y, z) => [(x - 507) / 150, (y - 465) / 150, z / 14];
const camera = (() => {
  const n = 11, A = Array.from({ length: n }, () => new Array(n + 1).fill(0));
  const add = (row, rhs) => row.forEach((a, i) => { row.forEach((b, j) => { A[i][j] += a * b; }); A[i][n] += a * rhs; });
  control.forEach(([x, y, z, u, v]) => {
    const [X, Y, Z] = norm(x, y, z), U = (u - 1020) / 200, V = (v - 400) / 200;
    add([X, Y, Z, 1, 0, 0, 0, 0, -U * X, -U * Y, -U * Z], U);
    add([0, 0, 0, 0, X, Y, Z, 1, -V * X, -V * Y, -V * Z], V);
  });
  for (let i = 0; i < n; i++) {
    let p = i;
    for (let r = i; r < n; r++) if (Math.abs(A[r][i]) > Math.abs(A[p][i])) p = r;
    [A[i], A[p]] = [A[p], A[i]];
    for (let r = 0; r < n; r++) if (r !== i) { const k = A[r][i] / A[i][i]; for (let c = i; c <= n; c++) A[r][c] -= k * A[i][c]; }
  }
  return A.map((r, i) => r[n] / r[i]);
})();
const project = (x, y, z) => {
  const [X, Y, Z] = norm(x, y, z), m = camera, w = m[8] * X + m[9] * Y + m[10] * Z + 1;
  return [(1020 + 200 * (m[0] * X + m[1] * Y + m[2] * Z + m[3]) / w).toFixed(1), (400 + 200 * (m[4] * X + m[5] * Y + m[6] * Z + m[7]) / w).toFixed(1), w];
};
const pt = (x, y, z) => project(x, y, z).slice(0, 2).join(' ');
const seg = (a, b) => `M${a}L${b}`;

const walls = [[400, 331, 420, 331], [594, 331, 614, 331], [507, 330, 507, 357], [366, 438, 407, 438], [608, 438, 648, 438], [439, 424, 439, 444], [575, 424, 575, 444], [439, 491, 439, 513], [575, 491, 575, 513], [400, 580, 400, 606], [614, 580, 614, 606], [456, 605, 483, 605], [531, 605, 558, 605], [481, 457, 481, 512], [534, 457, 534, 512], [481, 457, 534, 457]];
const columns = [[367, 334], [367, 383], [374, 492], [400, 533], [647, 334], [647, 383], [640, 492], [614, 533], [439, 377], [573, 377], [481, 405], [533, 405]];
const glazing = [[400, 605, 614, 605, .2], [614, 533, 614, 605, .12], [400, 533, 400, 580, .16], [374, 441, 374, 498, .14], [374, 498, 399, 498, .2], [399, 498, 399, 533, .16], [367, 334, 367, 438, .1]];
walls.sort((a, b) => (b[0] + b[2] - b[1] - b[3]) - (a[0] + a[2] - a[1] - a[3]));
const face = (w, z) => `M${pt(w[0], w[1], z)}L${pt(w[2], w[3], z)}L${pt(w[2], w[3], z + 1)}L${pt(w[0], w[1], z + 1)}z`;
let out = '', fine = '', major = '';
const cell = (x1, y1, x2, y2, bold) => {
  if (project(x1, y1, 0)[2] < .2 || project(x2, y2, 0)[2] < .2) return;
  const s = seg(pt(x1, y1, 0), pt(x2, y2, 0));
  fine += s;
  if (bold) major += s;
};
for (let i = -21; i <= 28; i++) for (let j = -21; j <= 28; j++) {
  const x = 394 + i * 20, y = 611 - j * 20;
  cell(x, y, x, y - 20, i % 8 === 0);
  cell(x, y, x + 20, y, j % 8 === 0);
}
out += `<path d="${fine}" stroke="#e4eaef" stroke-width=".9" fill="none"/><path d="${major}" stroke="#bfcdd9" fill="none"/>`;
out += '<polygon points="860,450 1024,359 1196,458 1036,618" fill="#dcfaf8" fill-opacity=".65"/>';
let feet = '';
[...columns, ...walls.flatMap(w => [[w[0], w[1]], [w[2], w[3]]])].forEach(([x, y]) => {
  const [u, v] = project(x, y, 0);
  const front = x < 410 && y > 330 || y > 600;
  feet += `<path transform="translate(${u} ${v})" d="M-2-2v5M2-2v5M-2 0h4M-2 3l4-4" opacity="${front ? 1 : .4}"/>`;
});
out += `<g stroke="#111" stroke-width="1.400" fill="none">${feet}</g>`;
for (let z = 0; z < 14; z++) {
  walls.forEach(w => {
    const front = (w[0] === 400 && w[1] === 580) || w[0] === 366;
    const alpha = front ? .95 : w[1] === 605 ? .6 : .45;
    out += `<path d="${face(w, z)}" fill="#c4102c" fill-opacity="${alpha}" stroke="#f6ebe8" stroke-width="1"/>`;
  });
  glazing.forEach(g => {
    out += `<path d="${face(g, z)}" fill="#8fa3a6" fill-opacity="${g[4]}"/>`;
  });
  out += `<path d="${columns.map(([x, y]) => seg(pt(x, y, z), pt(x, y, z + 1))).join('')}" stroke="#343c8c" stroke-opacity=".9" stroke-width="1.100" fill="none"/>`;
  const top = z === 13;
  out += `<path d="${outline.map((p, i) => (i ? 'L' : 'M') + pt(p[0], p[1], z + 1)).join('')}z" fill="#a3adad" fill-opacity="${top ? .36 : .28}" stroke="#f4f2ee" stroke-opacity=".85"/>`;
  out += `<path d="${beams.map(b => seg(pt(b[0], b[1], z + 1), pt(b[2], b[3], z + 1))).join('')}" stroke="#343c8c" stroke-opacity=".8" fill="none"/>`;
  const box = (x1, y1, x2, y2) => `M${pt(x1, y1, z + 1)}L${pt(x2, y1, z + 1)}L${pt(x2, y2, z + 1)}L${pt(x1, y2, z + 1)}z${seg(pt(x1, y1, z + 1), pt(x2, y2, z + 1))}${seg(pt(x2, y1, z + 1), pt(x1, y2, z + 1))}`;
  out += `<path d="${box(483, 405, 532, 456)}" fill="${top ? '#fff' : 'none'}" fill-opacity=".75" stroke="#111" stroke-opacity="${top ? 1 : .3}" stroke-width="${top ? 1.2 : 1}"/><path d="${box(483, 459, 532, 497)}" fill="${top ? '#c8102e' : 'none'}" fill-opacity=".85" stroke="#111" stroke-opacity="${top ? 1 : .3}" stroke-width="${top ? 1.2 : 1}"/>`;
}
out += '<polygon points="860,450 1024,359 1196,458 1036,618" fill="#c8f0ee" fill-opacity=".12" stroke="#5fe3da" stroke-width="1.200"/>';
out += '<path d="M1021 514v-10M1019 506l2-3 2 3M1019 500h4l-4 4h4" stroke="#1a22d8" fill="none" stroke-width="1.300"/><path d="M1019 513l-8-5M1010 506l5 1-2 3zM1006 503l2 2v3M1010 503l-2 2" stroke="#25d825" fill="#25d825"/><path d="M1022 514l10-7M1035 504l-5 3 2 2z" stroke="#d8202c" fill="#d8202c"/>';
document.getElementById('tower').innerHTML = out;
```
